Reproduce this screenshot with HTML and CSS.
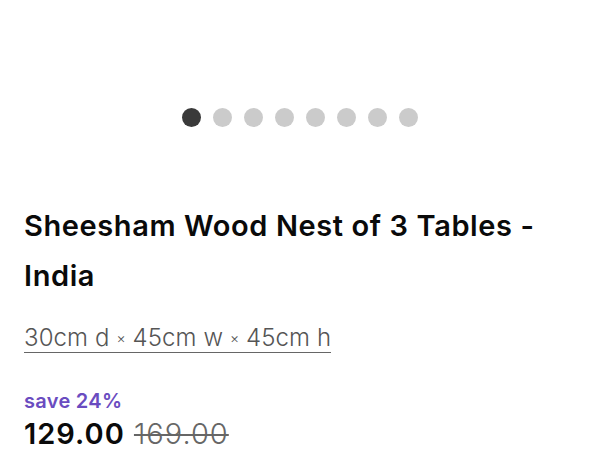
FILE: index.html
```html
<!DOCTYPE html>
<html>
<head>
<meta charset="utf-8">
<link rel="stylesheet" href="styles.css">
</head>
<body>
<div class="page">
  <div class="dots">
    <span class="dot active"></span>
    <span class="dot"></span>
    <span class="dot"></span>
    <span class="dot"></span>
    <span class="dot"></span>
    <span class="dot"></span>
    <span class="dot"></span>
    <span class="dot"></span>
  </div>
  <h1 class="title">Sheesham Wood Nest of 3 Tables - India</h1>
  <div class="dims"><span class="dims-text">30cm d <span class="x">×</span> 45cm w <span class="x">×</span> 45cm h</span></div>
  <div class="save">save 24%</div>
  <div class="price"><span class="now">129.00</span> <span class="was">169.00</span></div>
</div>
</body>
</html>
```
FILE: styles.css
```css
html, body {
  margin: 0;
  padding: 0;
  background: #fff;
}
body {
  font-family: "Inter", "Lato", sans-serif;
  color: #111;
}
.page {
  width: 600px;
  height: 450px;
  overflow: hidden;
  padding: 0 24px;
  box-sizing: border-box;
}
.dots {
  display: flex;
  justify-content: center;
  gap: 12px;
  padding-top: 108px;
}
.dot {
  width: 19px;
  height: 19px;
  border-radius: 50%;
  background: #cbcbcb;
}
.dot.active {
  background: #3a3a3a;
}
.title {
  margin: 74px 0 0;
  font-size: 29px;
  font-weight: 600;
  line-height: 50px;
  color: #0a0a0a;
  letter-spacing: 0.6px;
}
.dims {
  margin-top: 22px;
  font-size: 24px;
  font-weight: 300;
  color: #555;
  line-height: 30px;
  letter-spacing: 0.1px;
}
.dims-text {
  border-bottom: 1.5px solid #666;
  padding-bottom: 0;
}
.x {
  font-size: 14px;
  vertical-align: 3px;
}
.save {
  margin-top: 35px;
  font-size: 20px;
  font-weight: 600;
  color: #6a4cc0;
  line-height: 26px;
  letter-spacing: 0.3px;
}
.price {
  font-size: 29px;
  line-height: 40px;
  letter-spacing: 1px;
}
.now {
  font-weight: 600;
  color: #0a0a0a;
}
.was {
  font-weight: 300;
  color: #666;
  text-decoration: line-through;
  text-decoration-thickness: 2px;
}
```
